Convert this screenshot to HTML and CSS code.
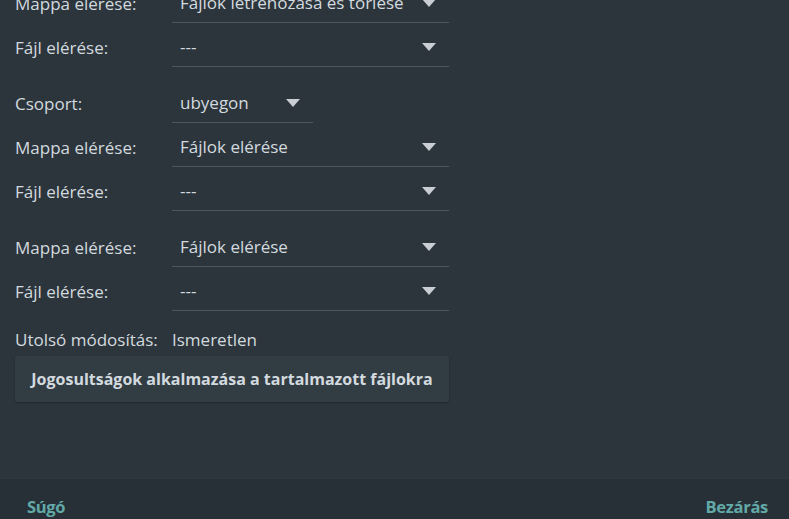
FILE: index.html
```html
<!DOCTYPE html>
<html lang="hu">
<head>
<meta charset="utf-8">
<link rel="stylesheet" href="styles.css">
</head>
<body>
<div class="dialog">
  <div class="content">
    <div class="group first">
      <div class="row">
        <span class="label">Mappa elérése:</span>
        <div class="combo"><span class="value">Fájlok létrehozása és törlése</span><span class="arrow"></span></div>
      </div>
      <div class="row">
        <span class="label">Fájl elérése:</span>
        <div class="combo"><span class="value">---</span><span class="arrow"></span></div>
      </div>
    </div>
    <div class="group">
      <div class="row">
        <span class="label">Csoport:</span>
        <div class="combo short"><span class="value">ubyegon</span><span class="arrow"></span></div>
      </div>
      <div class="row">
        <span class="label">Mappa elérése:</span>
        <div class="combo"><span class="value">Fájlok elérése</span><span class="arrow"></span></div>
      </div>
      <div class="row">
        <span class="label">Fájl elérése:</span>
        <div class="combo"><span class="value">---</span><span class="arrow"></span></div>
      </div>
    </div>
    <div class="group">
      <div class="row">
        <span class="label">Mappa elérése:</span>
        <div class="combo"><span class="value">Fájlok elérése</span><span class="arrow"></span></div>
      </div>
      <div class="row">
        <span class="label">Fájl elérése:</span>
        <div class="combo"><span class="value">---</span><span class="arrow"></span></div>
      </div>
    </div>
    <div class="modified">
      <span class="mlabel">Utolsó módosítás:</span>
      <span class="mvalue">Ismeretlen</span>
    </div>
    <button class="apply">Jogosultságok alkalmazása a tartalmazott fájlokra</button>
  </div>
  <div class="footer">
    <span class="fbtn">Súgó</span>
    <span class="fbtn">Bezárás</span>
  </div>
</div>
</body>
</html>
```
FILE: styles.css
```css
html, body {
  margin: 0;
  padding: 0;
  height: 100%;
  background: #2c353c;
  overflow: hidden;
}
body {
  font-family: "Open Sans", "Noto Sans", sans-serif;
  font-size: 17px;
  color: #d3dadf;
}
.dialog {
  display: flex;
  flex-direction: column;
  height: 519px;
}
.content {
  flex: 1;
  padding: 0 340px 0 15px;
  margin-top: -21px;
}
.group {
  margin-top: 12px;
}
.group.first {
  margin-top: 0;
}
.row {
  display: flex;
  align-items: stretch;
  height: 44px;
}
.label {
  width: 157px;
  display: flex;
  align-items: center;
  padding-top: 4px;
  white-space: nowrap;
}
.combo {
  flex: 1;
  display: flex;
  align-items: center;
  justify-content: space-between;
  border-bottom: 1px solid #4c565d;
  padding: 4px 13px 0 8px;
  white-space: nowrap;
}
.combo.short {
  flex: 0 0 auto;
  width: 120px;
}
.arrow {
  width: 0;
  height: 0;
  border-left: 7.5px solid transparent;
  border-right: 7.5px solid transparent;
  border-top: 8px solid #c8ced3;
}
.modified {
  display: flex;
  align-items: center;
  height: 45px;
  padding-top: 12px;
  box-sizing: border-box;
  white-space: nowrap;
}
.mlabel {
  width: 157px;
}
.apply {
  display: block;
  width: 100%;
  height: 46px;
  margin-top: 0;
  background: #323c43;
  border: none;
  border-radius: 2px;
  box-shadow: 0 1px 2px rgba(0,0,0,0.25);
  color: #d3dadf;
  font-family: inherit;
  font-size: 16px;
  font-weight: 700;
  white-space: nowrap;
}
.footer {
  height: 41px;
  border-top: 1px solid #2f383f;
  background: #263036;
  display: flex;
  justify-content: space-between;
  align-items: center;
  padding: 14px 21px 0 27px;
  box-sizing: border-box;
}
.fbtn {
  color: #62a9a8;
  font-weight: 700;
  font-size: 16.5px;
  letter-spacing: -0.3px;
}
```
